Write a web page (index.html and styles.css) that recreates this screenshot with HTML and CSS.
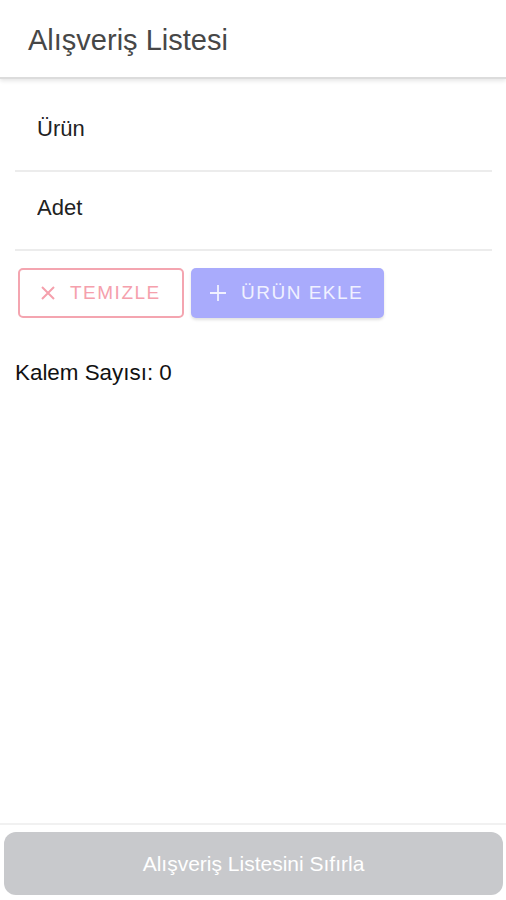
FILE: index.html
```html
<!DOCTYPE html>
<html lang="tr">
<head>
<meta charset="utf-8">
<title>Alışveriş Listesi</title>
<link rel="stylesheet" href="styles.css">
</head>
<body>
<div class="app">
  <header class="header">
    <h1 class="title">Alışveriş Listesi</h1>
  </header>
  <main class="content">
    <div class="field"><input class="input" type="text" placeholder="Ürün"></div>
    <div class="field"><input class="input" type="text" placeholder="Adet"></div>
    <div class="actions">
      <button class="btn btn-outline" type="button">
        <svg class="icon icon-x" viewBox="0 0 16 16" width="16" height="16"><path d="M2 2 L14 14 M14 2 L2 14" stroke="currentColor" stroke-width="2" fill="none"/></svg>
        <span>TEMIZLE</span>
      </button>
      <button class="btn btn-fill" type="button">
        <svg class="icon icon-plus" viewBox="0 0 18 18" width="18" height="18"><path d="M9 1 V17 M1 9 H17" stroke="currentColor" stroke-width="1.8" fill="none"/></svg>
        <span>ÜRÜN EKLE</span>
      </button>
    </div>
    <p class="count">Kalem Sayısı: 0</p>
  </main>
  <footer class="footer">
    <button class="reset" type="button">Alışveriş Listesini Sıfırla</button>
  </footer>
</div>
</body>
</html>
```
FILE: styles.css
```css
* { box-sizing: border-box; }
html, body { margin: 0; padding: 0; background: #fff; }
body { font-family: "Liberation Sans", Arial, sans-serif; }
.app { display: flex; flex-direction: column; height: 900px; }
.header {
  height: 79px;
  display: flex;
  align-items: center;
  padding-left: 28px;
  border-bottom: 2px solid #dcdcdc;
  box-shadow: 0 2px 4px rgba(0,0,0,0.10);
}
.title { margin: 0; font-size: 29px; font-weight: 400; color: #474747; padding-top: 3px; }
.content { flex: 1; padding: 14px 14px 0 15px; }
.field { border-bottom: 2px solid #ececec; height: 79px; display: flex; align-items: center; }
.input {
  width: 100%; border: 0; outline: 0; background: transparent;
  font-family: "Liberation Sans", Arial, sans-serif; font-size: 22px; color: #222;
  padding: 0 0 6px 22px;
}
.input::placeholder { color: #222; opacity: 1; }
.actions { display: flex; gap: 7px; padding: 17px 0 0 3px; }
.btn {
  height: 50px; display: flex; align-items: center; gap: 14px;
  font-family: "Liberation Sans", Arial, sans-serif; font-weight: 400; font-size: 19px; letter-spacing: 1.5px;
  border-radius: 5px; cursor: pointer;
}
.btn-outline { width: 166px; padding: 0 0 0 20px; background: #fff; border: 2px solid #f4a5b0; color: #f5a0ac; }
.btn-fill { width: 193px; padding: 0 0 0 18px; background: #a9abfc; border: 0; color: #f0f1ff; box-shadow: 0 2px 3px rgba(0,0,0,0.12); }
.icon { flex: none; }
.count { margin: 42px 0 0; font-size: 22.4px; color: #111; }
.footer { border-top: 2px solid #f1f1f1; padding: 7px 3px 5px 4px; }
.reset {
  width: 100%; height: 63px; border: 0; border-radius: 12px; background: #c8c9cc;
  color: #fff; font-family: "Liberation Sans", Arial, sans-serif; font-size: 21px;
}
```
